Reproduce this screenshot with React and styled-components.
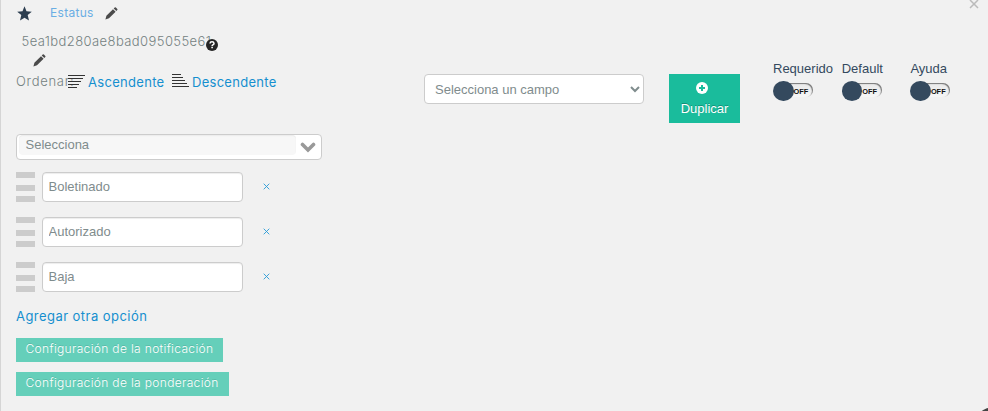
import React from 'react';
import styled, { createGlobalStyle } from 'styled-components';

const GlobalStyle = createGlobalStyle`
  * { box-sizing: border-box; }
  body { margin: 0; background: #f1f1f1; font-family: "Liberation Sans", Arial, sans-serif; font-size: 13px; }
  svg { display: block; flex: none; }
`;

const Panel = styled.main`
  position: relative;
  width: 988px;
  height: 411px;
  overflow: hidden;
  padding-left: 15px;
  border-left: 1px solid #d5d5d5;
  background: #f1f1f1;
`;

const Header = styled.header`
  display: flex;
  align-items: flex-start;
  height: 134px;
`;

const Identity = styled.div`
  width: 408px;
`;

const TitleRow = styled.div`
  display: flex;
  align-items: center;
  height: 27px;
  padding-left: 1px;
`;

const Label = styled.span`
  font-family: Inter, "Open Sans", sans-serif;
  font-size: ${(p) => p.$size || 13}px;
  font-weight: ${(p) => p.$weight || 400};
  line-height: 20px;
  letter-spacing: ${(p) => p.$spacing || 0}px;
  color: ${(p) => p.$color || '#748181'};
  white-space: nowrap;
`;

const Title = styled(Label)`
  width: 55px;
  margin: -1px 0 0 18px;
`;

const CodeRow = styled.div`
  position: relative;
  width: 204px;
  height: 27px;
  padding: 4px 0 0 5.5px;
`;

const HelpBadge = styled.span`
  position: absolute;
  left: 190px;
  top: 12px;
`;

const EditRow = styled.div`
  height: 17px;
  padding-left: 17px;
`;

const SortRow = styled.div`
  display: flex;
  align-items: flex-start;
  height: 24px;
`;

const SortTitle = styled(Label)`
  width: 52px;
`;

const SortLink = styled.a`
  display: flex;
  gap: ${(p) => p.$gap}px;
  width: ${(p) => p.$width}px;
  padding-top: ${(p) => p.$top}px;
`;

const SortText = styled(Label)`
  margin-top: ${(p) => p.$shift}px;
`;

const FieldSelect = styled.select`
  width: 220px;
  height: 30px;
  margin-top: 74px;
  padding: 4px 0 4px 6px;
  border: 1px solid #ccc;
  border-radius: 4px;
  background: #fff;
  color: #7f8c8d;
  font: 13px "Liberation Sans", Arial, sans-serif;
`;

const DuplicateButton = styled.button`
  display: flex;
  flex-direction: column;
  align-items: center;
  gap: 6px;
  width: 71px;
  height: 49px;
  margin: 74px 33px 0 25px;
  padding: 8px 0 0;
  border: 0;
  background: #1abc9c;
  color: #fff;
  font: 13px/18px "Liberation Sans", Arial, sans-serif;
  text-shadow: 0 -1px 0 rgba(0, 0, 0, 0.25);

  svg { margin-right: 5px; }
`;

const Switches = styled.div`
  display: grid;
  grid-template-columns: 68.7px 68.7px 50px;
  padding-top: 60px;
`;

const SwitchField = styled.label`
  color: #34495e;
  line-height: 18px;
`;

const Track = styled.div`
  display: flex;
  align-items: center;
  width: 40px;
  height: 14px;
  margin-top: 5px;
  border-radius: 7px;
  background: linear-gradient(#e9e9e9, #f6f6f6);
  box-shadow: inset -1px 1px 1px #777;
  color: #111;
  font: bold 7.4px/16px "Liberation Sans", Arial, sans-serif;
`;

const Knob = styled.span`
  flex: none;
  width: 20.5px;
  height: 20px;
  margin-top: 1px;
  border-radius: 50%;
  background: #34495e;
`;

const OffText = styled.span`
  padding-top: 3px;
`;

const Combo = styled.div`
  display: flex;
  width: 306px;
  height: 26px;
  padding-left: 2px;
  border: 1px solid #ccc;
  border-radius: 4px;
  background: #fff;
`;

const ComboValue = styled.div`
  width: 277px;
  height: 20px;
  padding-left: 6.5px;
  border-radius: 4px;
  background: #f7f7f7;
  box-shadow: inset 0 1px 1px #ececec;
  color: #7f8c8d;
  line-height: 20px;
`;

const ComboArrow = styled.div`
  padding: 6px 0 0 4px;
`;

const Options = styled.div`
  display: grid;
  gap: 15px;
  margin-top: 12px;
`;

const OptionRow = styled.div`
  display: flex;
  height: 30px;
`;

const Handle = styled.div`
  display: grid;
  grid-template-rows: 6px 6px 6px;
  row-gap: 6px;
  width: 19px;
  margin-right: 7px;
`;

const Bar = styled.span`
  background: #ccc;
  &:nth-child(2) { margin: 1px 0 -1px; }
`;

const OptionInput = styled.input`
  width: 201px;
  height: 30px;
  padding: 3px 6px 5px 5.5px;
  border: 1px solid #ccc;
  border-radius: 4px;
  background: #fff;
  box-shadow: inset 0 1px 1px rgba(0, 0, 0, 0.075);
  color: #7f8c8d;
  font: 13px "Liberation Sans", Arial, sans-serif;
`;

const RemoveButton = styled.a`
  padding: 11px 0 0 20px;
`;

const AddOption = styled.div`
  margin: 14px 0 12px;
  height: 20px;
`;

const ConfigButton = styled.button`
  display: block;
  width: ${(p) => p.$width}px;
  height: 24px;
  margin-bottom: 10px;
  padding: 0 0 2px 9.5px;
  border: 0;
  background: #65cfba;
  color: #fff;
  text-align: left;
  text-shadow: 0 -1px 0 rgba(0, 0, 0, 0.12);
`;

const CloseMark = styled.span`
  position: absolute;
  left: 968px;
  top: -1px;
`;

const CornerBubble = styled.span`
  position: absolute;
  left: 970px;
  top: 407px;
  width: 48px;
  height: 48px;
  border-radius: 50%;
  background: #444;
`;

const Star = () => (
  <svg width="15" height="15" viewBox="0 0 15 15">
    <path fill="#2c3e50" d="M7.5 .3 9.5 5.2 14.8 5.7 10.7 9.1 12 14.6 7.5 11.7 3 14.6 4.3 9.1 .2 5.7 5.5 5.2Z" />
  </svg>
);

const Pencil = () => (
  <svg width="13" height="13" viewBox="0 0 13 13" fill="#4b4b4b">
    <path d="M.4 12.4 1.4 8.7 8 2.2 10.6 4.8 4 11.3ZM8.7 1.5 9.7.5Q10.3 0 10.9.5L12.3 1.9Q12.8 2.5 12.3 3.1L11.3 4.1Z" />
  </svg>
);

const Help = () => (
  <svg width="12" height="12" viewBox="0 0 12 12">
    <circle cx="6" cy="6" r="6" fill="#252525" />
    <path d="M4 4.5Q4.1 2.8 6 2.8T8 4.4Q8 5.3 6.9 5.8 6.1 6.2 6.1 7" fill="none" stroke="#fff" strokeWidth="1.5" />
    <path d="M5.3 7.8h1.6v1.5H5.3z" fill="#fff" />
  </svg>
);

const SortLines = ({ widths }) => (
  <svg width="17" height="14" viewBox="0 0 17 14" fill="#333">
    {widths.map((w, i) => <rect key={i} x="0" y={i * 3} width={w} height="1" />)}
  </svg>
);

const Plus = () => (
  <svg width="12" height="12" viewBox="0 0 12 12">
    <circle cx="6" cy="6" r="6" fill="#fff" />
    <path d="M6 3v6M3 6h6" stroke="#1abc9c" strokeWidth="2" />
  </svg>
);

const Chevron = () => (
  <svg width="16" height="12" viewBox="0 0 16 12">
    <path d="M2.5 3.5 8 9 13.5 3.5" fill="none" stroke="#999" strokeWidth="3.6" strokeLinecap="round" />
  </svg>
);

const Cross = ({ size, color, width }) => (
  <svg width={size} height={size} viewBox="0 0 10 10">
    <path d="M1 1 9 9M9 1 1 9" stroke={color} strokeWidth={width} />
  </svg>
);

const OPTIONS = ['Boletinado', 'Autorizado', 'Baja'];
const SWITCHES = ['Requerido', 'Default', 'Ayuda'];

export default function App() {
  return (
    <>
      <GlobalStyle />
      <Panel>
        <Header>
          <Identity>
            <TitleRow>
              <Star />
              <Title $color="#6aaee4" $size={12} $spacing={0.3}>Estatus</Title>
              <Pencil />
            </TitleRow>
            <CodeRow>
              <Label $weight={300} $spacing={0.42}>5ea1bd280ae8bad095055e61</Label>
              <HelpBadge><Help /></HelpBadge>
            </CodeRow>
            <EditRow><Pencil /></EditRow>
            <SortRow>
              <SortTitle $weight={300} $spacing={0.7}>Ordenar:</SortTitle>
              <SortLink $gap={3} $width={104} $top={4}>
                <SortLines widths={[17, 15, 13, 11, 9]} />
                <SortText $color="#158fcf" $spacing={0.3} $shift={-3}>Ascendente</SortText>
              </SortLink>
              <SortLink $gap={3} $width={104} $top={3}>
                <SortLines widths={[9, 11, 13, 15, 17]} />
                <SortText $color="#158fcf" $spacing={0.28} $shift={-2}>Descendente</SortText>
              </SortLink>
            </SortRow>
          </Identity>
          <FieldSelect defaultValue="">
            <option value="">Selecciona un campo</option>
          </FieldSelect>
          <DuplicateButton><Plus />Duplicar</DuplicateButton>
          <Switches>
            {SWITCHES.map((name) => (
              <SwitchField key={name}>
                {name}
                <Track><Knob /><OffText>OFF</OffText></Track>
              </SwitchField>
            ))}
          </Switches>
        </Header>
        <Combo>
          <ComboValue>Selecciona</ComboValue>
          <ComboArrow><Chevron /></ComboArrow>
        </Combo>
        <Options>
          {OPTIONS.map((name) => (
            <OptionRow key={name}>
              <Handle><Bar /><Bar /><Bar /></Handle>
              <OptionInput defaultValue={name} />
              <RemoveButton><Cross size={7} color="#299bd6" width={1.3} /></RemoveButton>
            </OptionRow>
          ))}
        </Options>
        <AddOption><Label $color="#158fcf" $spacing={0.45}>Agregar otra opción</Label></AddOption>
        <ConfigButton $width={207}><Label $color="#fff" $size={12} $weight={300} $spacing={0.34}>Configuración de la notificación</Label></ConfigButton>
        <ConfigButton $width={213}><Label $color="#fff" $size={12} $weight={300} $spacing={0.34}>Configuración de la ponderación</Label></ConfigButton>
        <CloseMark><Cross size={10} color="#bbb" width={1.5} /></CloseMark>
        <CornerBubble />
      </Panel>
    </>
  );
}
